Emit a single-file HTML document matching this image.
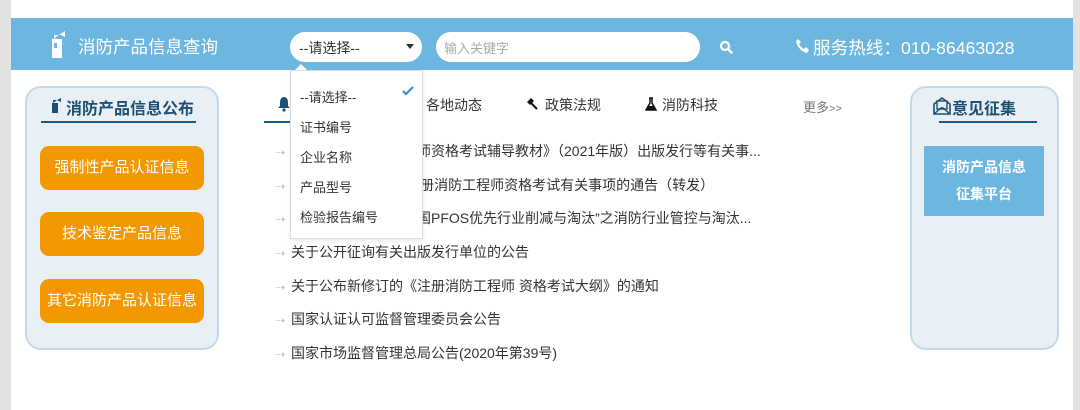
<!DOCTYPE html>
<html><head><meta charset="utf-8"><style>
*{margin:0;padding:0;box-sizing:border-box}
body{width:1080px;height:410px;overflow:hidden;background:#fff;position:relative;font-family:"Liberation Sans","Noto Sans CJK SC",sans-serif;color:#333}
.a{position:absolute}
.gl{left:0;top:0;width:11px;height:410px;background:#e2e2e2}
.gr{left:1073px;top:0;width:7px;height:410px;background:#e2e2e2}
.hd{left:11px;top:18px;width:1062px;height:52px;background:#6cb6e0}
.panel{background:#e8f0f6;border:2px solid #c3d9ea;border-radius:16px}
.btn{left:40px;width:164px;height:44px;background:#f39800;border-radius:9px;color:#fff;font-size:15px;text-align:center;line-height:44px}
.news{left:276px;font-size:14px;color:#333;white-space:nowrap}
.news i{font-style:normal;color:#bbb;font-size:11px;margin-right:5px;display:inline-block;width:10px}
.opt{left:300px;font-size:13px;color:#333}
</style></head><body>
<div class="a gl"></div><div class="a gr"></div>
<div class="a hd"></div>
<svg class="a" style="left:49px;top:30px" width="18" height="28" viewBox="0 0 18 28"><path d="M3 9h10v19H3z" fill="#fff"/><path d="M5 9V5h5l6-4v6l-6-3" fill="#fff"/><rect x="5" y="13" width="3" height="5" fill="#6cb6e0"/></svg>
<div class="a" style="left:78px;top:34px;font-size:17.5px;color:#fff">消防产品信息查询</div>
<div class="a" style="left:290px;top:32px;width:132px;height:30px;background:#fff;border-radius:15px"></div>
<div class="a" style="left:299px;top:38px;font-size:14px;color:#333">--请选择--</div>
<div class="a" style="left:406px;top:44px;width:0;height:0;border-left:4px solid transparent;border-right:4px solid transparent;border-top:5px solid #333"></div>
<div class="a" style="left:436px;top:32px;width:264px;height:30px;background:#fff;border-radius:15px"></div>
<div class="a" style="left:444px;top:38px;font-size:13px;color:#aaa">输入关键字</div>
<svg class="a" style="left:719px;top:40px" width="14" height="14" viewBox="0 0 14 14"><circle cx="6" cy="6" r="4" fill="none" stroke="#fff" stroke-width="2.2"/><path d="M9 9l3.5 3.5" stroke="#fff" stroke-width="2.5" stroke-linecap="round"/></svg>
<svg class="a" style="left:795px;top:38px" width="16" height="16" viewBox="0 0 16 16"><path d="M3 1l3 3-2 2c1 2 3 4 5 5l2-2 3 3-2 3C7 14 2 9 1 3z" fill="#fff"/></svg>
<div class="a" style="left:813px;top:35px;font-size:17.6px;color:#fff">服务热线：010-86463028</div>

<div class="a panel" style="left:25px;top:86px;width:194px;height:264px"></div>
<svg class="a" style="left:48px;top:97px" width="14" height="16" viewBox="0 0 14 16"><path d="M4 6h6v10H4z" fill="#1d4f73"/><path d="M5 6V3h4l4-2v4l-4-2" fill="#1d4f73"/></svg>
<div class="a" style="left:66px;top:95px;font-size:16px;font-weight:bold;color:#1d4f73">消防产品信息公布</div>
<div class="a" style="left:41px;top:121px;width:155px;height:2px;background:#1d5b80"></div>
<div class="a btn" style="top:146px">强制性产品认证信息</div>
<div class="a btn" style="top:212px">技术鉴定产品信息</div>
<div class="a btn" style="top:279px">其它消防产品认证信息</div>

<svg class="a" style="left:277px;top:96px" width="14" height="16" viewBox="0 0 14 16"><path d="M7 1c3 0 4 3 4 6v3l2 2H1l2-2V7c0-3 1-6 4-6z" fill="#1d4f73"/><circle cx="7" cy="14" r="1.6" fill="#1d4f73"/></svg>
<div class="a" style="left:264px;top:121px;width:30px;height:2px;background:#1d5b80"></div>
<div class="a" style="left:426px;top:95px;font-size:14px">各地动态</div>
<svg class="a" style="left:525px;top:97px" width="14" height="14" viewBox="0 0 14 14"><path d="M2 5l4-4 3 3-4 4z" fill="#111"/><path d="M6 6l6 6" stroke="#111" stroke-width="2"/></svg>
<div class="a" style="left:545px;top:95px;font-size:14px">政策法规</div>
<svg class="a" style="left:645px;top:97px" width="12" height="14" viewBox="0 0 12 14"><path d="M4 1h4M5 1v5L1 13h10L7 6V1" fill="none" stroke="#111" stroke-width="1.5"/><path d="M3 9h6l2 4H1z" fill="#111"/></svg>
<div class="a" style="left:662px;top:95px;font-size:14px">消防科技</div>
<div class="a" style="left:803px;top:97px;font-size:13px;color:#777">更多<span style="font-size:11px">&gt;&gt;</span></div>

<div class="a news" style="top:141px"><i>&#x21E2;</i>关于《注册消防工程师资格考试辅导教材》（2021年版）出版发行等有关事...</div>
<div class="a news" style="top:175px"><i>&#x21E2;</i>关于2021年度一级注册消防工程师资格考试有关事项的通告（转发）</div>
<div class="a news" style="top:208px"><i>&#x21E2;</i>关于组织开展消防中国PFOS优先行业削减与淘汰”之消防行业管控与淘汰...</div>
<div class="a news" style="top:242px"><i>&#x21E2;</i>关于公开征询有关出版发行单位的公告</div>
<div class="a news" style="top:276px"><i>&#x21E2;</i>关于公布新修订的《注册消防工程师 资格考试大纲》的通知</div>
<div class="a news" style="top:309px"><i>&#x21E2;</i>国家认证认可监督管理委员会公告</div>
<div class="a news" style="top:343px"><i>&#x21E2;</i>国家市场监督管理总局公告(2020年第39号)</div>

<div class="a" style="left:290px;top:70px;width:133px;height:169px;background:#fff;border:1px solid #ddd;box-shadow:0 2px 4px rgba(0,0,0,.08)"></div>
<div class="a" style="left:295px;top:64px;width:0;height:0;border-left:6px solid transparent;border-right:6px solid transparent;border-bottom:6px solid #fff"></div>
<div class="a opt" style="top:87px">--请选择--</div>
<svg class="a" style="left:402px;top:86px" width="12" height="10" viewBox="0 0 12 10"><path d="M1 5l3 3 7-7" fill="none" stroke="#3a8fd6" stroke-width="2.2"/></svg>
<div class="a opt" style="top:117px">证书编号</div>
<div class="a opt" style="top:147px">企业名称</div>
<div class="a opt" style="top:177px">产品型号</div>
<div class="a opt" style="top:207px">检验报告编号</div>

<div class="a panel" style="left:910px;top:86px;width:149px;height:264px"></div>
<svg class="a" style="left:932px;top:96px" width="20" height="20" viewBox="0 0 20 20"><path d="M2 8l8-6 8 6v10H2z" fill="none" stroke="#1d4f73" stroke-width="1.6"/><rect x="5" y="5" width="10" height="8" fill="#e8f0f6" stroke="#1d4f73" stroke-width="1.4"/><path d="M2 18l7-6h2l7 6" fill="none" stroke="#1d4f73" stroke-width="1.4"/></svg>
<div class="a" style="left:952px;top:95px;font-size:16px;font-weight:bold;color:#1d4f73">意见征集</div>
<div class="a" style="left:939px;top:121px;width:98px;height:2px;background:#1d5b80"></div>
<div class="a" style="left:924px;top:146px;width:120px;height:70px;background:#6cb6e0;color:#fff;font-weight:bold;font-size:14px;text-align:center;line-height:27px;padding-top:8px">消防产品信息<br>征集平台</div>
</body></html>
